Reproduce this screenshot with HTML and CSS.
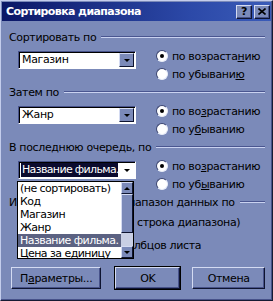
FILE: index.html
```html
<!DOCTYPE html>
<html lang="ru">
<head>
<meta charset="utf-8">
<title>Сортировка диапазона</title>
<link rel="stylesheet" href="styles.css">
</head>
<body>
<div class="window">
  <div class="titlebar">
    <span class="title">Сортировка диапазона</span>
    <div class="tb-btns">
      <span class="tbtn">?</span>
      <span class="tbtn"><svg width="8" height="7" viewBox="0 0 8 7"><path d="M0.5 0.5 L7.5 6.5 M7.5 0.5 L0.5 6.5" stroke="#000" stroke-width="1.6"/></svg></span>
    </div>
  </div>
  <div class="content">
    <div class="group">
      <div class="ghead"><span>Сортировать по</span><i class="rule"></i></div>
      <div class="gbody">
        <div class="combo"><span class="field">Магазин</span><span class="arrow"></span></div>
        <div class="radios">
          <div class="radio"><span class="circle on"></span><span>по возраста<u>н</u>ию</span></div>
          <div class="radio"><span class="circle"></span><span>по убывани<u>ю</u></span></div>
        </div>
      </div>
    </div>
    <div class="group">
      <div class="ghead"><span>Затем по</span><i class="rule"></i></div>
      <div class="gbody">
        <div class="combo"><span class="field">Жанр</span><span class="arrow"></span></div>
        <div class="radios">
          <div class="radio"><span class="circle on"></span><span>по во<u>з</u>растанию</span></div>
          <div class="radio"><span class="circle"></span><span>по у<u>б</u>ыванию</span></div>
        </div>
      </div>
    </div>
    <div class="group">
      <div class="ghead"><span>В последнюю очередь, по</span><i class="rule"></i></div>
      <div class="gbody">
        <div class="combo"><span class="field"><span class="sel">Название фильма.</span></span><span class="arrow pressed"></span></div>
        <div class="radios">
          <div class="radio"><span class="circle on"></span><span>по во<u>з</u>растанию</span></div>
          <div class="radio"><span class="circle"></span><span>по уб<u>ы</u>ванию</span></div>
        </div>
      </div>
    </div>
    <div class="group last">
      <div class="ghead"><span>Идентифицировать диапазон данных по</span><i class="rule"></i></div>
      <div class="radios2">
        <div class="radio"><span class="circle on"></span><span>подписям (первая строка диапазона)</span></div>
        <div class="radio"><span class="circle"></span><span>обозначениям столбцов листа</span></div>
      </div>
    </div>
    <div class="buttons">
      <span class="btn w1">П<u>а</u>раметры...</span>
      <span class="btn def w2">OK</span>
      <span class="btn w3">Отмена</span>
    </div>
  </div>
  <div class="dropdown">
    <div class="items">
      <div class="item">(не сортировать)</div>
      <div class="item">Код</div>
      <div class="item">Магазин</div>
      <div class="item">Жанр</div>
      <div class="item hl">Название фильма.</div>
      <div class="item">Цена за единицу</div>
    </div>
    <div class="scroll">
      <span class="sbtn up"></span>
      <span class="thumb"></span>
      <span class="track"></span>
      <span class="sbtn down"></span>
    </div>
  </div>
</div>
</body>
</html>
```
FILE: styles.css
```css
body {
  margin: 0;
  font-family: "DejaVu Sans", "Liberation Sans", sans-serif;
  font-size: 11px;
  letter-spacing: -0.35px;
  color: #000;
}
.window {
  position: relative;
  width: 273px;
  height: 301px;
  box-sizing: border-box;
  background: #7b8ab9;
  border: 1px solid;
  border-color: #c4cdec #161b33 #161b33 #c4cdec;
  box-shadow: inset -1px -1px 0 #47528a;
  overflow: hidden;
}
.titlebar {
  height: 19px;
  margin: 1px 1px 0;
  padding: 0 1px 0 4px;
  display: flex;
  align-items: center;
  justify-content: space-between;
  background: linear-gradient(90deg, #0b1766, #2c49a8 70%, #3a5bb8);
}
.title {
  color: #fff;
  font-weight: bold;
  font-size: 11px;
  letter-spacing: -0.6px;
}
.tb-btns {
  display: flex;
  gap: 2px;
}
.tbtn {
  width: 16px;
  height: 14px;
  box-sizing: border-box;
  display: flex;
  align-items: center;
  justify-content: center;
  background: #7b8ab9;
  border: 1px solid;
  border-color: #d4dbf2 #0e1430 #0e1430 #d4dbf2;
  box-shadow: inset -1px -1px 0 #47528a;
  font-weight: bold;
  font-size: 11px;
  line-height: 1;
}
.content {
  padding: 0 7px 0 8px;
}
.group {
  margin-top: 2px;
}
.group:first-child {
  margin-top: 9px;
}
.ghead {
  height: 14px;
  display: flex;
  align-items: center;
  gap: 5px;
  white-space: nowrap;
}
.rule {
  flex: 1;
  height: 0;
  border-top: 1px solid #4a5690;
  border-bottom: 1px solid #c9d2f0;
}
.gbody {
  display: flex;
  height: 39px;
}
.combo {
  margin: 7px 0 0 9px;
  width: 118px;
  height: 18px;
  box-sizing: border-box;
  display: flex;
  align-items: center;
  padding: 1px;
  background: #fff;
  border: 1px solid;
  border-color: #47528a #fff #fff #47528a;
  box-shadow: inset 1px 1px 0 #000;
}
.field {
  flex: 1;
  min-width: 0;
  height: 14px;
  line-height: 14px;
  padding-left: 2px;
  display: flex;
  white-space: nowrap;
  overflow: hidden;
}
.sel {
  flex: 1;
  margin-left: -1px;
  padding-left: 1px;
  background: #0b0b2e;
  color: #fff;
  white-space: nowrap;
  letter-spacing: -0.65px;
}
.arrow {
  width: 15px;
  height: 14px;
  margin-left: 2px;
  box-sizing: border-box;
  background: #7b8ab9;
  border: 1px solid;
  border-color: #d4dbf2 #0e1430 #0e1430 #d4dbf2;
  display: flex;
  align-items: center;
  justify-content: center;
}
.arrow::after,
.sbtn.down::after {
  content: "";
  border-left: 3px solid transparent;
  border-right: 3px solid transparent;
  border-top: 3px solid #000;
}
.arrow.pressed {
  margin-left: 1px;
  background: #fff;
  border-color: #fff;
}
.radios {
  margin: 3px 0 0 20px;
}
.radio {
  height: 18px;
  display: flex;
  align-items: center;
  gap: 4px;
  white-space: nowrap;
}
.circle {
  width: 12px;
  height: 12px;
  box-sizing: border-box;
  border-radius: 50%;
  background: #fff;
  border: 1px solid;
  border-color: #3a4470 #e8ecf8 #e8ecf8 #3a4470;
  display: flex;
  align-items: center;
  justify-content: center;
}
.circle.on::after {
  content: "";
  width: 4px;
  height: 4px;
  border-radius: 50%;
  background: #000;
}
.radios2 {
  margin: 4px 0 0 9px;
  display: flex;
  flex-direction: column;
  gap: 5px;
}
.buttons {
  margin: 13px 0 0 2px;
  display: flex;
}
.btn {
  height: 22px;
  box-sizing: border-box;
  display: flex;
  align-items: center;
  justify-content: center;
  background: #7b8ab9;
  border: 1px solid;
  border-color: #d4dbf2 #0e1430 #0e1430 #d4dbf2;
  box-shadow: inset -1px -1px 0 #47528a;
}
.btn.def {
  outline: 1px solid #000;
}
.w1 { width: 92px; }
.w2 { width: 66px; margin-left: 14px; }
.w3 { width: 74px; margin-left: 12px; }
.dropdown {
  position: absolute;
  left: 16px;
  top: 180px;
  width: 117px;
  height: 78px;
  box-sizing: border-box;
  border: 1px solid #000;
  background: #fff;
  display: flex;
  overflow: hidden;
}
.items {
  flex: 1;
  min-width: 0;
}
.item {
  height: 13px;
  line-height: 13px;
  padding-left: 2px;
  white-space: nowrap;
  overflow: hidden;
  letter-spacing: -0.55px;
}
.item.hl {
  background: #5b6282;
  color: #fff;
}
.scroll {
  width: 12px;
  display: flex;
  flex-direction: column;
}
.sbtn,
.thumb {
  box-sizing: border-box;
  background: #7b8ab9;
  border: 1px solid;
  border-color: #d4dbf2 #0e1430 #0e1430 #d4dbf2;
  display: flex;
  align-items: center;
  justify-content: center;
}
.sbtn {
  height: 12px;
}
.sbtn.up::after {
  content: "";
  border-left: 3px solid transparent;
  border-right: 3px solid transparent;
  border-bottom: 3px solid #000;
}
.thumb {
  height: 39px;
}
.track {
  flex: 1;
  background: #c9cfe4;
}
```
